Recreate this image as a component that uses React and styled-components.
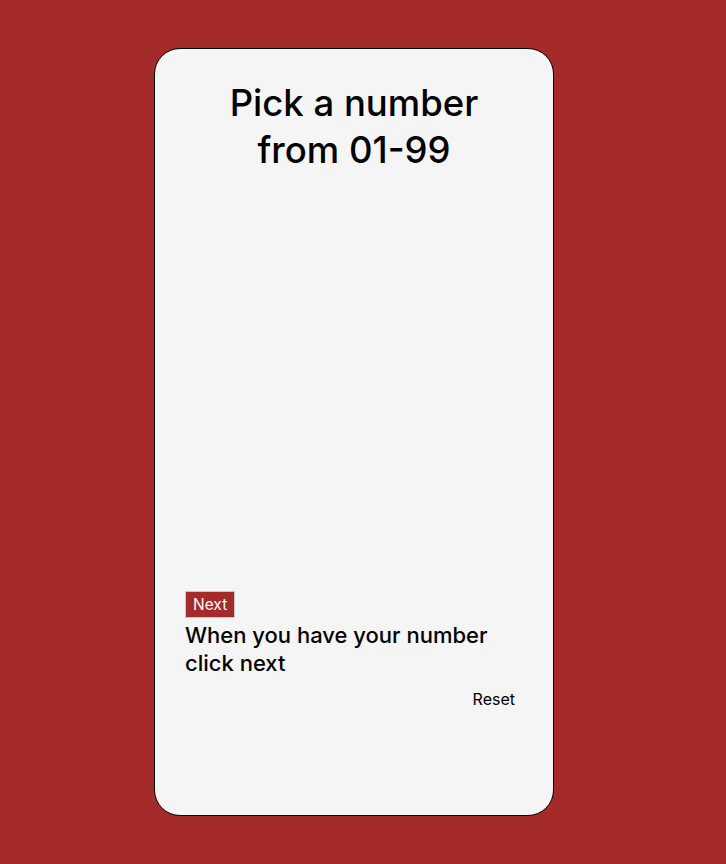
import React from "react";
import styled, { createGlobalStyle } from "styled-components";

const GlobalStyle = createGlobalStyle`
  html, body {
    margin: 0;
    padding: 0;
    background: #a52a2a;
    font-family: Inter, "Noto Sans", sans-serif;
  }
`;

export default function App() {
  return (
    <>
      <GlobalStyle />
      <Page>
        <Card>
          <Title>
            Pick a number
            <br />
            from 01-99
          </Title>
          <Spacer />
          <Controls>
            <NextButton>Next</NextButton>
            <Hint>
              When you have your number
              <br />
              click next
            </Hint>
            <ResetRow>
              <ResetButton>Reset</ResetButton>
            </ResetRow>
          </Controls>
        </Card>
      </Page>
    </>
  );
}

const Page = styled.div`
  display: flex;
  justify-content: center;
  padding: 48px 18px 48px 0;
  min-height: 864px;
  box-sizing: border-box;
`;

const Card = styled.div`
  width: 400px;
  height: 768px;
  box-sizing: border-box;
  background: #f5f5f5;
  border: 1px solid #000;
  border-radius: 26px;
  display: flex;
  flex-direction: column;
  padding: 31px 30px 104px;
`;

const Title = styled.h1`
  margin: 0;
  text-align: center;
  font-size: 36.5px;
  font-weight: 500;
  line-height: 47px;
  color: #000;
`;

const Spacer = styled.div`
  flex: 1;
`;

const Controls = styled.div`
  display: flex;
  flex-direction: column;
  align-items: flex-start;
`;

const NextButton = styled.button`
  background: #a52a2a;
  color: #fff;
  border: 1px solid #c8c8c8;
  font-family: inherit;
  font-size: 15.5px;
  padding: 3px 7px;
  line-height: 19px;
`;

const Hint = styled.h2`
  margin: 3px 0 0;
  font-size: 22px;
  font-weight: 500;
  line-height: 28px;
  color: #000;
`;

const ResetRow = styled.div`
  align-self: stretch;
  display: flex;
  justify-content: flex-end;
  margin-top: 10px;
`;

const ResetButton = styled.button`
  background: transparent;
  border: none;
  font-family: inherit;
  font-size: 16px;
  color: #000;
  padding: 2px 8px;
`;
